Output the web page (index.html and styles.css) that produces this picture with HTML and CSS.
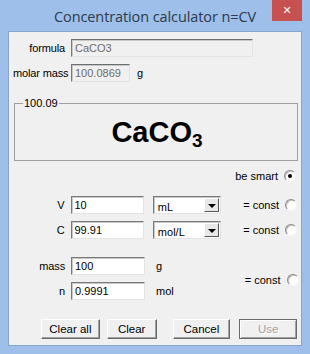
FILE: index.html
```html
<!DOCTYPE html>
<html><head>
<meta charset="utf-8">
<title>Concentration calculator n=CV</title>
<link rel="stylesheet" href="styles.css">
</head><body>
<div class="window">
  <div class="titlebar">
    <span class="title">Concentration calculator n=CV</span>
    <span class="close">&#x2715;</span>
  </div>
  <div class="client">
    <div class="row r-formula">
      <span class="lbl">formula</span>
      <span class="field off wide">CaCO3</span>
    </div>
    <div class="row r-molar">
      <span class="lbl">molar mass</span>
      <span class="field off short">100.0869</span>
      <span class="unit">g</span>
    </div>
    <fieldset class="group">
      <legend>100.09</legend>
      <div class="formula">CaCO<sub>3</sub></div>
    </fieldset>
    <div class="row r-smart">
      <span class="opt">be smart</span>
      <span class="radio on"></span>
    </div>
    <div class="row r-v">
      <span class="lbl">V</span>
      <span class="field">10</span>
      <span class="combo"><span class="val">mL</span><span class="drop"></span></span>
      <span class="opt">= const</span>
      <span class="radio"></span>
    </div>
    <div class="row r-c">
      <span class="lbl">C</span>
      <span class="field">99.91</span>
      <span class="combo"><span class="val">mol/L</span><span class="drop"></span></span>
      <span class="opt">= const</span>
      <span class="radio"></span>
    </div>
    <div class="pair">
      <div class="pair-left">
        <div class="row r-mass">
          <span class="lbl">mass</span>
          <span class="field">100</span>
          <span class="unit2">g</span>
        </div>
        <div class="row r-n">
          <span class="lbl">n</span>
          <span class="field">0.9991</span>
          <span class="unit2">mol</span>
        </div>
      </div>
      <div class="pair-right">
        <span class="opt">= const</span>
        <span class="radio"></span>
      </div>
    </div>
    <div class="buttons">
      <span class="btn b-all">Clear all</span>
      <span class="btn b-clear">Clear</span>
      <span class="btn b-cancel">Cancel</span>
      <span class="btn b-use">Use</span>
    </div>
  </div>
</div>
</body></html>
```

FILE: styles.css
```css
* { box-sizing: border-box; }
html, body { margin: 0; padding: 0; }
body { width: 310px; height: 354px; overflow: hidden;
       font-family: "Liberation Sans", Arial, sans-serif; font-size: 11px; color: #000; }

.window { width: 310px; height: 354px; background: #9dbfe9;
          display: flex; flex-direction: column; }

.titlebar { height: 31px; position: relative; display: flex; justify-content: center; align-items: center; }
.title { font-family: "Open Sans", "Noto Sans", sans-serif; font-size: 14.5px; color: #2c3b4d;
         padding-top: 2px; letter-spacing: -0.1px; }
.close { position: absolute; top: 0; left: 272px; width: 30px; height: 21px; background: #c75050;
         color: #fff; font-size: 11px; font-weight: bold; display: flex; align-items: center; justify-content: center;
         font-family: "DejaVu Sans", sans-serif; }

.client { margin: 0 8px 8px; height: 315px; background: #f0f0f0; border: 1px solid #88a4c8;
          display: flex; flex-direction: column; padding: 0 4px 0 4px; }

.row { display: flex; align-items: center; height: 18px; }
.lbl { width: 58px; text-align: right; padding-right: 6px; white-space: nowrap; letter-spacing: -0.15px; }

.field { height: 18px; background: #fff; padding: 1px 3px 0; line-height: 15px;
         border-top: 1px solid #7a7a7a; border-left: 1px solid #7a7a7a;
         border-right: 1px solid #e3e3e3; border-bottom: 1px solid #e3e3e3;
         box-shadow: inset 1px 1px #c8c8c8; width: 74px; }
.field.off { background: #f0f0f0; color: #6d6d6d; border-top-color: #6d6d6d; border-left-color: #7a7a7a; }
.field.wide { width: 182px; }
.field.short { width: 59px; }
.unit { margin-left: 7px; }

.r-formula { margin-top: 7px; }
.r-molar { margin-top: 7px; }

.group { margin: 15px 0 0 1px; width: 284px; height: 64px; padding: 0;
         border: 1px solid #a0a0a0; border-radius: 0; }
.group legend { margin-left: 8px; padding: 0 1px; font-size: 11px; }
.formula { text-align: center; font-weight: bold; font-size: 29px; line-height: 30px; margin-top: 8px; margin-left: 2px; }
.formula sub { font-size: 19px; vertical-align: -5px; line-height: 0; }

.opt { white-space: nowrap; }
.radio { width: 12px; height: 12px; border-radius: 50%; background: #fff; position: relative;
         border: 1px solid; border-color: #8a8a8a #f6f6f6 #f6f6f6 #8a8a8a;
         box-shadow: inset 1px 1px #c0c0c0; margin-left: 6px; flex: none; }
.radio.on::after { content: ""; position: absolute; left: 3px; top: 3px; width: 4px; height: 4px;
                   border-radius: 50%; background: #000; }

.r-smart { justify-content: flex-end; margin-top: 8px; height: 14px; padding-right: 1px; }

.r-v { margin-top: 13px; height: 18px; }
.r-c { margin-top: 7px; height: 18px; }
.r-v .opt, .r-c .opt { margin-left: 22px; }

.combo { display: flex; width: 69px; height: 18px; margin-left: 9px; background: #fff;
         border-top: 1px solid #7a7a7a; border-left: 1px solid #7a7a7a;
         border-right: 1px solid #e3e3e3; border-bottom: 1px solid #e3e3e3;
         box-shadow: inset 1px 1px #c8c8c8; padding: 1px; }
.combo .val { flex: 1; padding: 3px 0 0 3px; line-height: 12px; }
.drop { width: 15px; background: #e8e8e8; position: relative;
        border-top: 1px solid #fff; border-left: 1px solid #fff;
        border-right: 1px solid #555; border-bottom: 1px solid #555; }
.drop::after { content: ""; position: absolute; left: 3px; top: 5px;
               border-left: 4px solid transparent; border-right: 4px solid transparent; border-top: 4px solid #000; }

.pair { display: flex; margin-top: 18px; align-items: center; }
.pair-left { display: flex; flex-direction: column; }
.r-mass { height: 18px; }
.r-n { margin-top: 7px; height: 18px; }
.unit2 { margin-left: 11px; }
.pair-right { display: flex; align-items: center; margin-left: 71px; padding-top: 3px; }

.buttons { display: flex; margin-top: 19px; padding-left: 28px; }
.btn { height: 20px; display: flex; align-items: center; justify-content: center; background: #f0f0f0;
       border: 1px solid; border-color: #fff #6a6a6a #6a6a6a #fff; box-shadow: inset -1px -1px #a0a0a0;
       font-size: 11.5px; }
.b-all { width: 59px; }
.b-clear { width: 50px; margin-left: 7px; }
.b-cancel { width: 58px; margin-left: 16px; }
.b-use { width: 58px; margin-left: 9px; color: #a0a0a0; text-shadow: 1px 1px #fff;
         border-color: #6a6a6a; box-shadow: inset 1px 1px #fff, inset -1px -1px #a0a0a0; }
```
